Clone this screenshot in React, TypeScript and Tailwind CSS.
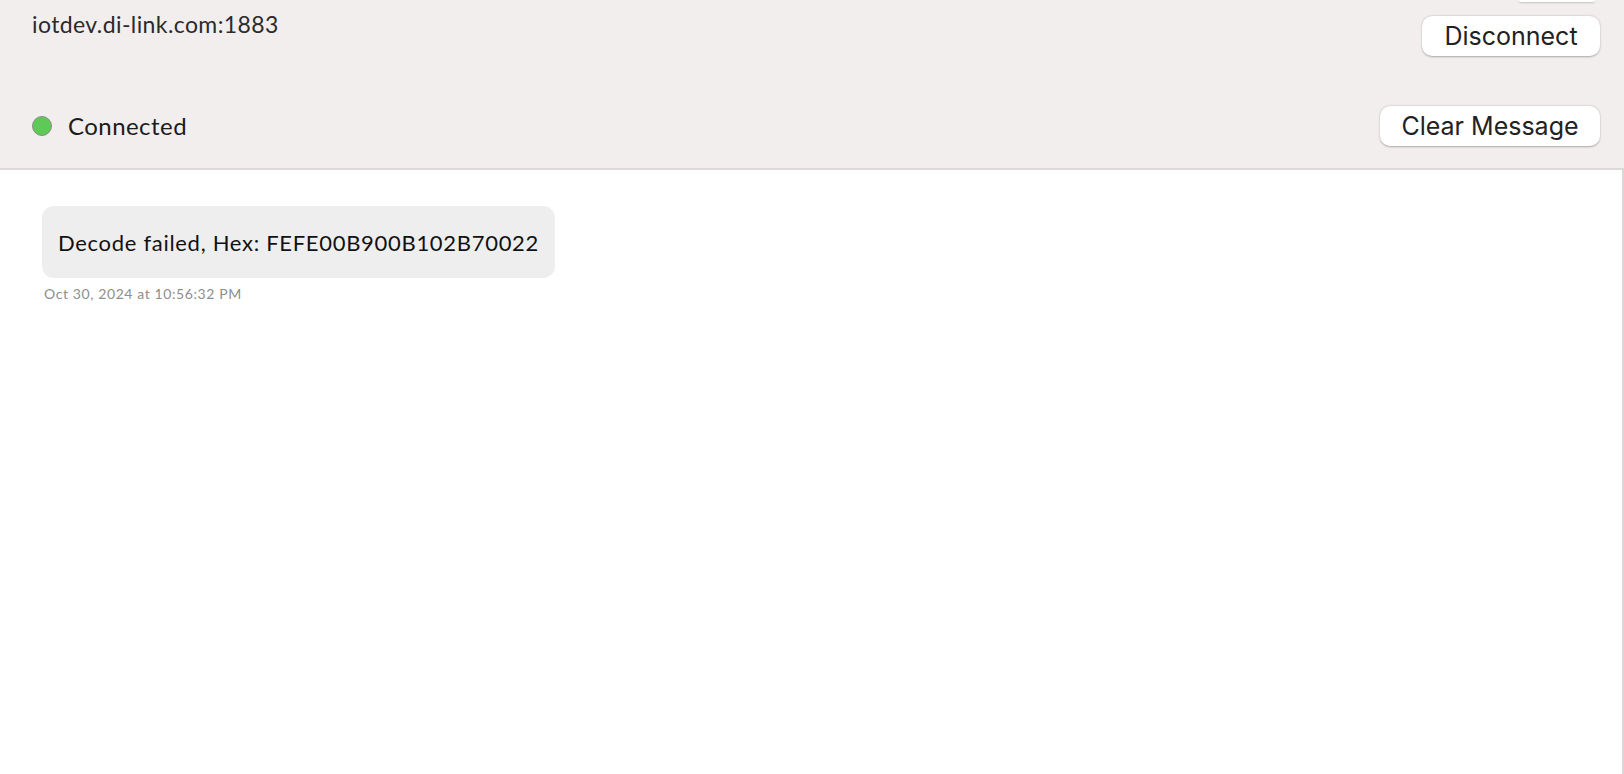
export default function App() {
  return (
    <div className="w-full h-[774px] bg-white flex flex-col font-['Lato','Noto_Sans',sans-serif] overflow-hidden">
      {/* connection header */}
      <div className="h-[170px] shrink-0 bg-[#f3eeee] border-b-2 border-[#ddd9d9] flex justify-between pl-[32px] pr-[24px]">
        <div className="flex flex-col">
          <div className="pt-[10px] h-[38px] text-[23px] leading-[28px] tracking-[0.4px] text-[#2b2b2b]">iotdev.di-link.com:1883</div>
          <div className="mt-[74px] h-[28px] flex items-center">
            <span className="w-[20px] h-[20px] rounded-full bg-[#5fc957] border-[1.5px] border-[#8c8c8c]" />
            <span className="ml-[16px] text-[24px] leading-[28px] tracking-[0.45px] text-[#1c1c1c]">Connected</span>
          </div>
        </div>
        <div className="flex flex-col items-end font-['Inter','Liberation_Sans',sans-serif]">
          <div className="h-[2px] w-[76px] mr-[5px] bg-white rounded-b-[6px] shadow-[0_1px_2px_rgba(0,0,0,0.2)]" />
          <button className="mt-[14px] h-[40px] w-[178px] rounded-[10px] bg-white shadow-[0_0.5px_2px_rgba(0,0,0,0.3)] text-[25px] leading-[40px] text-[#222]">
            Disconnect
          </button>
          <button className="mt-[50px] h-[40px] w-[220px] rounded-[10px] bg-white shadow-[0_0.5px_2px_rgba(0,0,0,0.3)] text-[25px] leading-[40px] text-[#222]">
            Clear Message
          </button>
        </div>
      </div>
      {/* messages */}
      <div className="flex-1 border-r-2 border-[#dcd6d6] pl-[42px] pt-[36px]">
        <div className="inline-flex items-center h-[72px] px-[16px] rounded-[12px] bg-[#eeeeee] text-[22px] tracking-[0.7px] text-[#111]">
          Decode failed, Hex: FEFE00B900B102B70022
        </div>
        <div className="mt-[7px] ml-[2px] text-[14px] leading-[18px] tracking-[0.6px] text-[#8e8e8e]">Oct 30, 2024 at 10:56:32 PM</div>
      </div>
    </div>
  );
}
